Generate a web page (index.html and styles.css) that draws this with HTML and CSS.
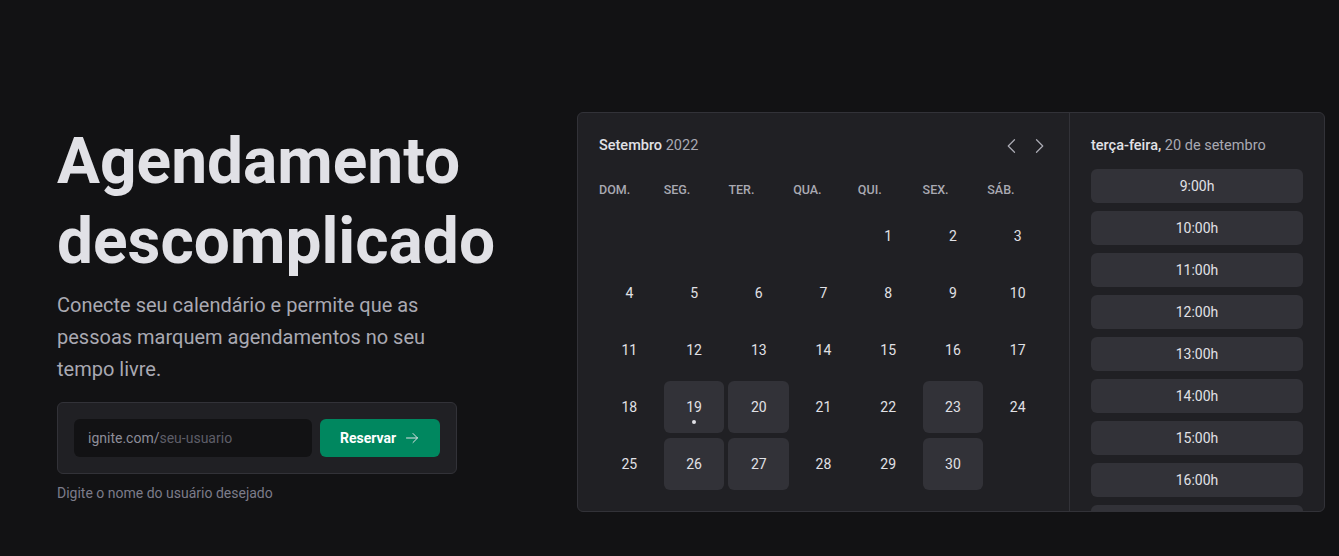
FILE: index.html
```html
<!DOCTYPE html>
<html lang="pt-BR">
<head>
<meta charset="utf-8">
<title>Ignite Call</title>
<link rel="stylesheet" href="styles.css">
</head>
<body>
<main class="page">
  <section class="hero">
    <h1 class="hero-title">Agendamento descomplicado</h1>
    <p class="hero-text">Conecte seu calendário e permite que as pessoas marquem agendamentos no seu tempo livre.</p>
    <form class="claim">
      <div class="claim-input"><span class="claim-prefix">ignite.com/</span><span class="claim-placeholder">seu-usuario</span></div>
      <button class="claim-btn" type="button">Reservar
        <svg class="claim-icon" viewBox="0 0 256 256" width="16" height="16"><path d="M40 128h176M144 56l72 72-72 72" fill="none" stroke="currentColor" stroke-width="16" stroke-linecap="round" stroke-linejoin="round"/></svg>
      </button>
    </form>
    <p class="claim-hint">Digite o nome do usuário desejado</p>
  </section>

  <section class="cal">
    <div class="cal-main">
      <header class="cal-header">
        <p class="cal-title">Setembro <span class="muted">2022</span></p>
        <div class="cal-nav">
          <svg viewBox="0 0 256 256" width="20" height="20"><path d="M160 208 80 128l80-80" fill="none" stroke="currentColor" stroke-width="16" stroke-linecap="round" stroke-linejoin="round"/></svg>
          <svg viewBox="0 0 256 256" width="20" height="20"><path d="m96 48 80 80-80 80" fill="none" stroke="currentColor" stroke-width="16" stroke-linecap="round" stroke-linejoin="round"/></svg>
        </div>
      </header>
      <div class="cal-weekdays">
        <span>DOM.</span><span>SEG.</span><span>TER.</span><span>QUA.</span><span>QUI.</span><span>SEX.</span><span>SÁB.</span>
      </div>
      <div class="cal-days">
        <span class="day"></span><span class="day"></span><span class="day"></span><span class="day"></span>
        <span class="day">1</span><span class="day">2</span><span class="day">3</span>
        <span class="day">4</span><span class="day">5</span><span class="day">6</span><span class="day">7</span><span class="day">8</span><span class="day">9</span><span class="day">10</span>
        <span class="day">11</span><span class="day">12</span><span class="day">13</span><span class="day">14</span><span class="day">15</span><span class="day">16</span><span class="day">17</span>
        <span class="day">18</span><span class="day day-on day-today">19</span><span class="day day-on">20</span><span class="day">21</span><span class="day">22</span><span class="day day-on">23</span><span class="day">24</span>
        <span class="day">25</span><span class="day day-on">26</span><span class="day day-on">27</span><span class="day">28</span><span class="day">29</span><span class="day day-on">30</span><span class="day"></span>
      </div>
    </div>
    <aside class="times">
      <p class="times-header">terça-feira, <span class="muted">20 de setembro</span></p>
      <div class="times-list">
        <span class="slot">9:00h</span>
        <span class="slot">10:00h</span>
        <span class="slot">11:00h</span>
        <span class="slot">12:00h</span>
        <span class="slot">13:00h</span>
        <span class="slot">14:00h</span>
        <span class="slot">15:00h</span>
        <span class="slot">16:00h</span>
        <span class="slot slot-partial"></span>
      </div>
    </aside>
  </section>
</main>
</body>
</html>
```

FILE: styles.css
```css
* { box-sizing: border-box; }

html, body {
  margin: 0;
  height: 100%;
  background: #121214;
  font-family: Roboto, "Liberation Sans", sans-serif;
  color: #e1e1e6;
}

p { margin: 0; }

.page {
  height: 556px;
  display: flex;
  align-items: center;
  gap: 80px;
  padding: 68px 0 0 17px;
  overflow: hidden;
}

.hero {
  width: 480px;
  flex-shrink: 0;
  padding: 0 40px;
  margin-top: 2px;
}

.hero-title {
  margin: 0;
  font-size: 64px;
  line-height: 80px;
  font-weight: 700;
  color: #e1e1e6;
}

.hero-text {
  margin-top: 7px;
  font-size: 20px;
  line-height: 32px;
  color: #a9a9b2;
}

.claim {
  margin-top: 17px;
  display: flex;
  gap: 8px;
  padding: 16px;
  background: #202024;
  border: 1px solid #323238;
  border-radius: 6px;
}

.claim-input {
  flex: 1;
  height: 38px;
  display: flex;
  align-items: center;
  padding: 0 14px;
  background: #121214;
  border-radius: 6px;
  font-size: 14px;
}

.claim-prefix { color: #8d8d99; }
.claim-placeholder { color: #5e5e68; }

.claim-btn {
  min-width: 120px;
  height: 38px;
  display: flex;
  align-items: center;
  justify-content: center;
  gap: 8px;
  padding: 0 16px;
  border: 0;
  border-radius: 6px;
  background: #00875f;
  color: #ffffff;
  font-family: inherit;
  font-size: 14px;
  font-weight: 700;
}

.claim-icon { color: #e1e1e6; }

.claim-hint {
  margin-top: 8px;
  font-size: 14px;
  line-height: 22px;
  color: #7c7c8a;
}

/* Calendar preview */
.cal {
  flex-shrink: 0;
  width: 748px;
  height: 400px;
  display: flex;
  background: #202024;
  border: 1px solid #323238;
  border-radius: 6px;
  overflow: hidden;
}

.cal-main {
  width: 491px;
  padding: 21px;
}

.cal-header {
  display: flex;
  align-items: center;
  justify-content: space-between;
  height: 22px;
  margin-top: 1px;
}

.cal-title {
  font-size: 14.5px;
  font-weight: 500;
  line-height: 22px;
  color: #e1e1e6;
}

.muted { color: #a9a9b2; font-weight: 400; }

.cal-nav {
  display: flex;
  gap: 7px;
  color: #a9a9b2;
  margin-right: -1px;
}

.cal-nav svg { display: block; }

.cal-weekdays {
  margin-top: 23px;
  display: grid;
  grid-template-columns: repeat(7, 1fr);
  column-gap: 4px;
  height: 20px;
  line-height: 20px;
  font-size: 12.5px;
  font-weight: 500;
  color: #a9a9b2;
}

.cal-days {
  margin-top: 10px;
  display: grid;
  grid-template-columns: repeat(7, 1fr);
  grid-auto-rows: 52px;
  column-gap: 4px;
  row-gap: 5px;
}

.day {
  position: relative;
  display: flex;
  align-items: center;
  justify-content: center;
  border-radius: 6px;
  font-size: 14px;
  color: #e1e1e6;
}

.day-on { background: #323238; }

.day-today::after {
  content: "";
  position: absolute;
  left: 50%;
  bottom: 9px;
  width: 4px;
  height: 4px;
  margin-left: -2px;
  border-radius: 50%;
  background: #e1e1e6;
}

.times {
  flex: 1;
  border-left: 1px solid #323238;
  padding: 22px 21px 0;
  overflow: hidden;
}

.times-header {
  font-size: 14.5px;
  font-weight: 500;
  line-height: 22px;
  color: #e1e1e6;
}

.times-list {
  margin-top: 12px;
  display: flex;
  flex-direction: column;
  gap: 8px;
}

.slot {
  display: block;
  height: 34px;
  line-height: 34px;
  text-align: center;
  background: #323238;
  border-radius: 6px;
  font-size: 14px;
  color: #e1e1e6;
}
```
